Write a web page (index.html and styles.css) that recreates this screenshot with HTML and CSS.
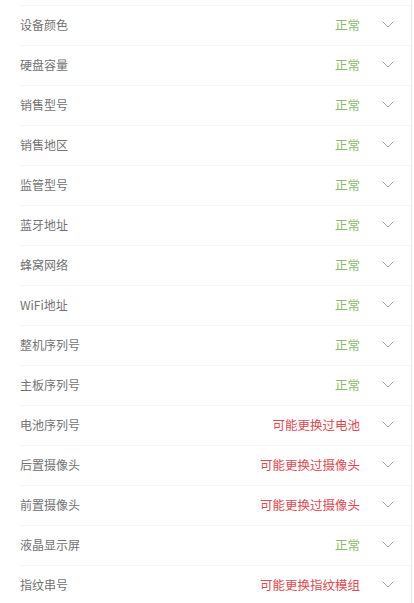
FILE: index.html
```html
<!DOCTYPE html>
<html lang="zh">
<head>
<meta charset="utf-8">
<link rel="stylesheet" href="styles.css">
</head>
<body>
<div class="list">
  <div class="row"><span class="label">设备颜色</span><span class="value ok">正常</span><svg class="chev" viewBox="0 0 12 7"><path d="M0.5 0.5 L6 6 L11.5 0.5"/></svg></div>
  <div class="row"><span class="label">硬盘容量</span><span class="value ok">正常</span><svg class="chev" viewBox="0 0 12 7"><path d="M0.5 0.5 L6 6 L11.5 0.5"/></svg></div>
  <div class="row"><span class="label">销售型号</span><span class="value ok">正常</span><svg class="chev" viewBox="0 0 12 7"><path d="M0.5 0.5 L6 6 L11.5 0.5"/></svg></div>
  <div class="row"><span class="label">销售地区</span><span class="value ok">正常</span><svg class="chev" viewBox="0 0 12 7"><path d="M0.5 0.5 L6 6 L11.5 0.5"/></svg></div>
  <div class="row"><span class="label">监管型号</span><span class="value ok">正常</span><svg class="chev" viewBox="0 0 12 7"><path d="M0.5 0.5 L6 6 L11.5 0.5"/></svg></div>
  <div class="row"><span class="label">蓝牙地址</span><span class="value ok">正常</span><svg class="chev" viewBox="0 0 12 7"><path d="M0.5 0.5 L6 6 L11.5 0.5"/></svg></div>
  <div class="row"><span class="label">蜂窝网络</span><span class="value ok">正常</span><svg class="chev" viewBox="0 0 12 7"><path d="M0.5 0.5 L6 6 L11.5 0.5"/></svg></div>
  <div class="row"><span class="label">WiFi地址</span><span class="value ok">正常</span><svg class="chev" viewBox="0 0 12 7"><path d="M0.5 0.5 L6 6 L11.5 0.5"/></svg></div>
  <div class="row"><span class="label">整机序列号</span><span class="value ok">正常</span><svg class="chev" viewBox="0 0 12 7"><path d="M0.5 0.5 L6 6 L11.5 0.5"/></svg></div>
  <div class="row"><span class="label">主板序列号</span><span class="value ok">正常</span><svg class="chev" viewBox="0 0 12 7"><path d="M0.5 0.5 L6 6 L11.5 0.5"/></svg></div>
  <div class="row"><span class="label">电池序列号</span><span class="value warn">可能更换过电池</span><svg class="chev" viewBox="0 0 12 7"><path d="M0.5 0.5 L6 6 L11.5 0.5"/></svg></div>
  <div class="row"><span class="label">后置摄像头</span><span class="value warn">可能更换过摄像头</span><svg class="chev" viewBox="0 0 12 7"><path d="M0.5 0.5 L6 6 L11.5 0.5"/></svg></div>
  <div class="row"><span class="label">前置摄像头</span><span class="value warn">可能更换过摄像头</span><svg class="chev" viewBox="0 0 12 7"><path d="M0.5 0.5 L6 6 L11.5 0.5"/></svg></div>
  <div class="row"><span class="label">液晶显示屏</span><span class="value ok">正常</span><svg class="chev" viewBox="0 0 12 7"><path d="M0.5 0.5 L6 6 L11.5 0.5"/></svg></div>
  <div class="row"><span class="label">指纹串号</span><span class="value warn">可能更换指纹模组</span><svg class="chev" viewBox="0 0 12 7"><path d="M0.5 0.5 L6 6 L11.5 0.5"/></svg></div>
</div>
</body>
</html>
```
FILE: styles.css
```css
html, body {
  margin: 0;
  padding: 0;
  background: #fff;
}
body {
  font-family: "Noto Sans CJK SC", "Noto Sans", sans-serif;
}
.list {
  width: 411px;
  border-right: 1px solid #e8e8e8;
  padding-top: 5px;
  min-height: 598px;
}
.row {
  margin-left: 20px;
  padding-right: 17px;
  padding-bottom: 2px;
  height: 37px;
  border-top: 1px solid #f5f5f5;
  display: flex;
  align-items: center;
}
.label {
  flex: 1;
  font-size: 12px;
  color: #737373;
}
.value {
  font-size: 12.5px;
  margin-right: 22px;
}
.ok {
  color: #8aba6c;
}
.warn {
  color: #e0494f;
}
.chev {
  width: 12px;
  height: 7px;
  fill: none;
  stroke: #a6a6a6;
  stroke-width: 1;
}
```
